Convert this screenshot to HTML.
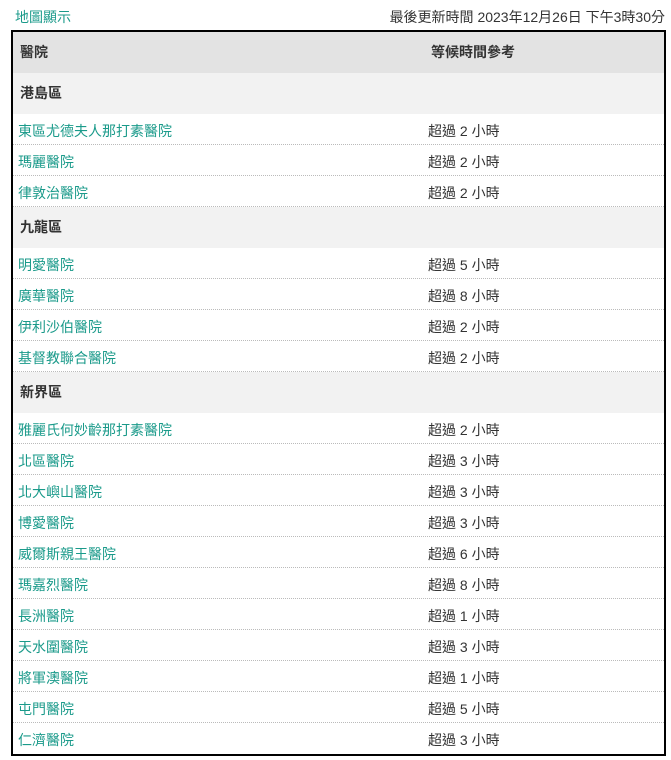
<!DOCTYPE html>
<html><head><meta charset="utf-8"><style>
body{margin:0;background:#fff;font-family:"Liberation Sans","Noto Sans CJK TC",sans-serif;font-size:14px;color:#333;}
.top{position:absolute;top:8px;left:15px;right:6px;height:18px;line-height:18px}
.top a{color:#1a9a8a;text-decoration:none}
.top span{position:absolute;right:0;top:0;color:#333}
.tbl{position:absolute;left:11px;top:30px;width:651px;border:2px solid #000}
.r{position:relative;height:31px;line-height:34px;border-bottom:1px dotted #bbb;box-sizing:border-box}
.r .a{position:absolute;left:5px;color:#1a9a8a}
.r .b{position:absolute;left:415px}
.h{height:41px;line-height:41px;background:#e3e3e3;font-weight:bold;position:relative}
.g{height:41px;line-height:40px;background:#f2f2f2;font-weight:bold;position:relative;padding-left:7px}
.h .a{position:absolute;left:7px}.h .b{position:absolute;left:418px}
</style></head><body>
<div class="top"><a>地圖顯示</a><span>最後更新時間 2023年12月26日 下午3時30分</span></div>
<div class="tbl">
<div class="h"><span class="a">醫院</span><span class="b">等候時間參考</span></div>
<div class="g">港島區</div>
<div class="r"><span class="a">東區尤德夫人那打素醫院</span><span class="b">超過 2 小時</span></div>
<div class="r"><span class="a">瑪麗醫院</span><span class="b">超過 2 小時</span></div>
<div class="r"><span class="a">律敦治醫院</span><span class="b">超過 2 小時</span></div>
<div class="g">九龍區</div>
<div class="r"><span class="a">明愛醫院</span><span class="b">超過 5 小時</span></div>
<div class="r"><span class="a">廣華醫院</span><span class="b">超過 8 小時</span></div>
<div class="r"><span class="a">伊利沙伯醫院</span><span class="b">超過 2 小時</span></div>
<div class="r"><span class="a">基督教聯合醫院</span><span class="b">超過 2 小時</span></div>
<div class="g">新界區</div>
<div class="r"><span class="a">雅麗氏何妙齡那打素醫院</span><span class="b">超過 2 小時</span></div>
<div class="r"><span class="a">北區醫院</span><span class="b">超過 3 小時</span></div>
<div class="r"><span class="a">北大嶼山醫院</span><span class="b">超過 3 小時</span></div>
<div class="r"><span class="a">博愛醫院</span><span class="b">超過 3 小時</span></div>
<div class="r"><span class="a">威爾斯親王醫院</span><span class="b">超過 6 小時</span></div>
<div class="r"><span class="a">瑪嘉烈醫院</span><span class="b">超過 8 小時</span></div>
<div class="r"><span class="a">長洲醫院</span><span class="b">超過 1 小時</span></div>
<div class="r"><span class="a">天水圍醫院</span><span class="b">超過 3 小時</span></div>
<div class="r"><span class="a">將軍澳醫院</span><span class="b">超過 1 小時</span></div>
<div class="r"><span class="a">屯門醫院</span><span class="b">超過 5 小時</span></div>
<div class="r" style="border-bottom:none"><span class="a">仁濟醫院</span><span class="b">超過 3 小時</span></div>
</div>
</body></html>
